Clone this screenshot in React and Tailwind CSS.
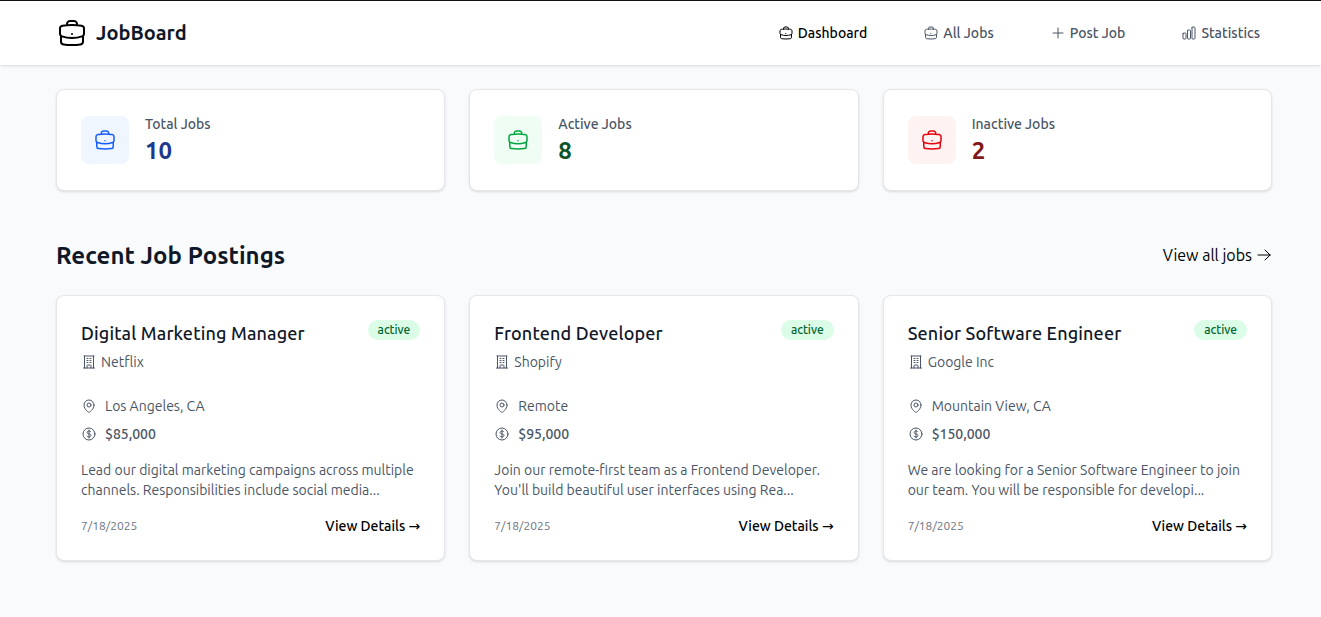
import {
  HiOutlineArrowRight,
  HiOutlineBriefcase,
  HiOutlineBuildingOffice,
  HiOutlineChartBar,
  HiOutlineCurrencyDollar,
  HiOutlineMapPin,
  HiOutlinePlus,
} from 'react-icons/hi2';

const navItems = [
  { label: 'Dashboard', icon: HiOutlineBriefcase, color: 'text-black' },
  { label: 'All Jobs', icon: HiOutlineBriefcase, color: 'text-gray-600' },
  { label: 'Post Job', icon: HiOutlinePlus, color: 'text-gray-600' },
  { label: 'Statistics', icon: HiOutlineChartBar, color: 'text-gray-600' },
];

const stats = [
  { label: 'Total Jobs', value: 10, box: 'bg-blue-50 text-blue-600', valueColor: 'text-blue-900' },
  { label: 'Active Jobs', value: 8, box: 'bg-green-50 text-green-600', valueColor: 'text-green-900' },
  { label: 'Inactive Jobs', value: 2, box: 'bg-red-50 text-red-600', valueColor: 'text-red-900' },
];

const jobs = [
  {
    title: 'Digital Marketing Manager',
    company: 'Netflix',
    location: 'Los Angeles, CA',
    salary: '$85,000',
    lines: ['Lead our digital marketing campaigns across multiple', 'channels. Responsibilities include social media...'],
  },
  {
    title: 'Frontend Developer',
    company: 'Shopify',
    location: 'Remote',
    salary: '$95,000',
    lines: ['Join our remote-first team as a Frontend Developer.', "You'll build beautiful user interfaces using Rea..."],
  },
  {
    title: 'Senior Software Engineer',
    company: 'Google Inc',
    location: 'Mountain View, CA',
    salary: '$150,000',
    lines: ['We are looking for a Senior Software Engineer to join', 'our team. You will be responsible for developi...'],
  },
];

function Header() {
  return (
    <header className="border-t border-[#111] bg-white shadow-sm">
      <div className="flex h-16 items-center justify-between pr-[49px] pl-14">
        <a className="flex items-center">
          <HiOutlineBriefcase className="mr-2 size-8 text-black" />
          <span className="text-xl font-bold text-gray-900">JobBoard</span>
        </a>
        <nav className="flex gap-8">
          {navItems.map(({ label, icon: Icon, color }) => (
            <a key={label} className={`flex items-center px-3 py-2 text-sm font-medium whitespace-nowrap ${color}`}>
              <Icon className="mr-1 size-4 shrink-0" />
              <span>{label}</span>
            </a>
          ))}
        </nav>
      </div>
    </header>
  );
}

function StatCard({ label, value, box, valueColor }) {
  return (
    <div className="flex items-center rounded-lg border border-gray-200 bg-white p-6 shadow-sm">
      <div className={`rounded-lg p-3 ${box}`}>
        <HiOutlineBriefcase className="size-6" />
      </div>
      <div className="ml-4">
        <p className="text-sm font-medium text-gray-600">{label}</p>
        <p className={`pt-0.5 text-2xl leading-[30px] font-bold ${valueColor}`}>{value}</p>
      </div>
    </div>
  );
}

function JobCard({ title, company, location, salary, lines }) {
  return (
    <article className="rounded-lg border border-gray-200 bg-white p-6 whitespace-nowrap shadow-sm">
      <div className="mb-6 flex items-start justify-between">
        <div>
          <h3 className="mb-1.5 text-lg leading-[26px] font-medium tracking-[0.15px] text-gray-900">{title}</h3>
          <div className="flex items-center text-sm text-gray-600">
            <HiOutlineBuildingOffice className="mr-1 size-4" />
            <span>{company}</span>
          </div>
        </div>
        <span className="rounded-full bg-green-100 px-2.5 py-0.5 text-xs font-medium text-green-800">active</span>
      </div>
      <div className="mb-4 space-y-2 text-sm text-gray-600">
        <div className="flex items-center">
          <HiOutlineMapPin className="mr-2 size-4" />
          <span>{location}</span>
        </div>
        <div className="flex items-center">
          <HiOutlineCurrencyDollar className="mr-2 size-4" />
          <span className="font-medium">{salary}</span>
        </div>
      </div>
      <p className="mb-4 text-sm text-gray-600">
        {lines.map((text) => (
          <span key={text} className="block">{text}</span>
        ))}
      </p>
      <div className="flex h-5 items-center justify-between">
        <span className="text-xs text-gray-500">7/18/2025</span>
        <a className="h-5 text-sm font-medium text-black">
          View Details <span className="font-['DejaVu_Sans',sans-serif] leading-none">→</span>
        </a>
      </div>
    </article>
  );
}

export default function App() {
  return (
    <div className="min-h-screen bg-gray-50 font-['Ubuntu','Noto_Sans',sans-serif]">
      <Header />
      <main className="pt-6 pr-[49px] pl-14">
        <section className="mb-12 grid grid-cols-3 gap-6">
          {stats.map((stat) => (
            <StatCard key={stat.label} {...stat} />
          ))}
        </section>
        <div className="mb-6 flex h-8 items-center justify-between">
          <h2 className="pt-0.5 text-2xl font-bold tracking-[0.04px] text-gray-900">Recent Job Postings</h2>
          <a className="flex items-center text-base text-black">
            <span>View all jobs</span>
            <HiOutlineArrowRight className="ml-1 size-4" />
          </a>
        </div>
        <section className="grid grid-cols-3 gap-6">
          {jobs.map((job) => (
            <JobCard key={job.title} {...job} />
          ))}
        </section>
      </main>
    </div>
  );
}
